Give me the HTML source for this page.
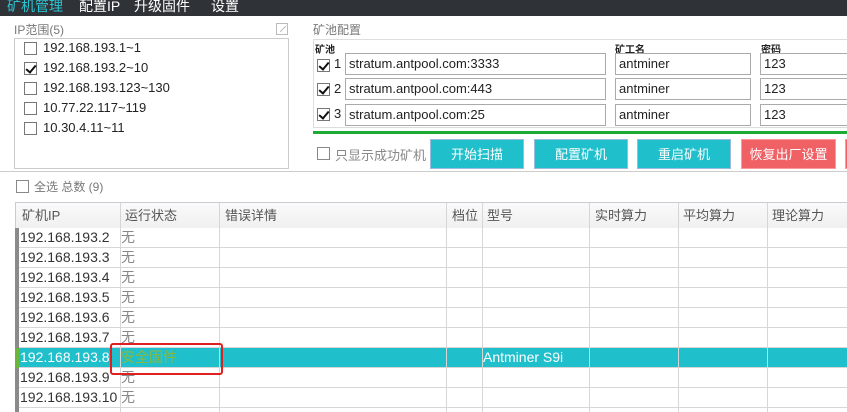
<!DOCTYPE html>
<html><head><meta charset="utf-8"><style>
*{box-sizing:border-box;margin:0;padding:0}
body{width:847px;height:412px;overflow:hidden;background:#fff;font-family:"Liberation Sans","Noto Sans CJK SC",sans-serif;position:relative;color:#333}
.a{position:absolute;white-space:nowrap}
.top{left:0;top:0;width:847px;height:16px;background:#2f3237}
.menu{top:-3px;font-size:14px;color:#fff;line-height:18px}
.cb{position:absolute;width:13px;height:13px;border:1px solid #777;background:#fff}
.cb.on::after{content:"";position:absolute;left:3px;top:0px;width:4px;height:8px;border:solid #111;border-width:0 2px 2px 0;transform:rotate(40deg)}
.lbl{font-size:12px;color:#777}
.ip{font-size:13px;color:#222}
.inp{position:absolute;border:1px solid #aaa;height:22px;font-size:13px;padding:2px 3px;line-height:16px;color:#222;background:#fff}
.btn{position:absolute;top:139px;height:30px;color:#fff;font-size:13px;text-align:center;line-height:30px;border:1px solid #9bd}
.tbl{left:15px;top:202px;width:832px;height:210px;border:1px solid #c9cdd3;border-right:none;border-bottom:none}
.hd{position:absolute;top:203px;height:25px;font-size:13px;color:#555;line-height:25px;background:linear-gradient(#fafafa,#f0f0f0)}
.vl{position:absolute;width:1px;background:#d6d6d6}
.hl{position:absolute;left:19px;width:828px;height:1px;background:#d6d6d6}
.r{position:absolute;font-size:14px;line-height:20px;color:#333}
.w{color:#888}
</style></head><body>
<div class="a top"></div>
<div class="a menu" style="left:7px;color:#2ac4d4">矿机管理</div>
<div class="a menu" style="left:79px">配置IP</div>
<div class="a menu" style="left:134px">升级固件</div>
<div class="a menu" style="left:211px">设置</div>

<div class="a lbl" style="left:14px;top:21px">IP范围(5)</div>
<svg class="a" style="left:276px;top:23px" width="13" height="13"><rect x="0.5" y="0.5" width="11" height="11" fill="none" stroke="#bbb"/><path d="M4 9 L10 3" stroke="#bbb"/></svg>
<div class="a" style="left:14px;top:38px;width:275px;height:131px;border:1px solid #ccc"></div>
<div class="cb" style="left:24px;top:42px"></div><div class="a ip" style="left:43px;top:40px">192.168.193.1~1</div>
<div class="cb on" style="left:24px;top:62px"></div><div class="a ip" style="left:43px;top:60px">192.168.193.2~10</div>
<div class="cb" style="left:24px;top:82px"></div><div class="a ip" style="left:43px;top:80px">192.168.193.123~130</div>
<div class="cb" style="left:24px;top:102px"></div><div class="a ip" style="left:43px;top:100px">10.77.22.117~119</div>
<div class="cb" style="left:24px;top:122px"></div><div class="a ip" style="left:43px;top:120px">10.30.4.11~11</div>

<div class="a lbl" style="left:313px;top:21px">矿池配置</div>
<div class="a" style="left:313px;top:39px;width:540px;height:89px;border:1px solid #ddd"></div>
<div class="a" style="left:315px;top:41px;font-size:10px;font-weight:bold;color:#222">矿池</div>
<div class="a" style="left:615px;top:41px;font-size:10px;font-weight:bold;color:#222">矿工名</div>
<div class="a" style="left:761px;top:41px;font-size:10px;font-weight:bold;color:#222">密码</div>
<div class="cb on" style="left:317px;top:59px"></div><div class="a ip" style="left:334px;top:56px">1</div>
<div class="inp" style="left:345px;top:53px;width:261px">stratum.antpool.com:3333</div>
<div class="inp" style="left:615px;top:53px;width:136px">antminer</div>
<div class="inp" style="left:760px;top:53px;width:100px">123</div>
<div class="cb on" style="left:317px;top:83px"></div><div class="a ip" style="left:334px;top:81px">2</div>
<div class="inp" style="left:345px;top:78px;width:261px">stratum.antpool.com:443</div>
<div class="inp" style="left:615px;top:78px;width:136px">antminer</div>
<div class="inp" style="left:760px;top:78px;width:100px">123</div>
<div class="cb on" style="left:317px;top:108px"></div><div class="a ip" style="left:334px;top:106px">3</div>
<div class="inp" style="left:345px;top:104px;width:261px">stratum.antpool.com:25</div>
<div class="inp" style="left:615px;top:104px;width:136px">antminer</div>
<div class="inp" style="left:760px;top:104px;width:100px">123</div>
<div class="a" style="left:313px;top:131px;width:534px;height:3px;background:#1daa35"></div>
<div class="cb" style="left:317px;top:147px;border-color:#888"></div>
<div class="a" style="left:335px;top:145px;font-size:13px;color:#888">只显示成功矿机</div>
<div class="btn" style="left:430px;width:94px;background:#1fbfcc">开始扫描</div>
<div class="btn" style="left:534px;width:94px;background:#1fbfcc">配置矿机</div>
<div class="btn" style="left:637px;width:94px;background:#1fbfcc">重启矿机</div>
<div class="btn" style="left:741px;width:95px;background:#f06166;border-color:#f99">恢复出厂设置</div>
<div class="btn" style="left:845px;width:10px;background:#f06166;border-color:#f99"></div>
<div class="a" style="left:0;top:171px;width:847px;height:1px;background:#ccc"></div>

<div class="cb" style="left:16px;top:180px;border-color:#888"></div>
<div class="a" style="left:34px;top:178px;font-size:12px;color:#777">全选 总数 (9)</div>

<div class="a tbl"></div>
<div class="hd" style="left:16px;width:831px"></div>
<div class="a hd" style="left:22px;background:none">矿机IP</div>
<div class="a hd" style="left:125px;background:none">运行状态</div>
<div class="a hd" style="left:225px;background:none">错误详情</div>
<div class="a hd" style="left:452px;background:none">档位</div>
<div class="a hd" style="left:487px;background:none">型号</div>
<div class="a hd" style="left:595px;background:none">实时算力</div>
<div class="a hd" style="left:683px;background:none">平均算力</div>
<div class="a hd" style="left:772px;background:none">理论算力</div>
<div class="a" style="left:15px;top:228px;width:4px;height:184px;background:#8a8a8a"></div>
<div class="a" style="left:19px;top:348px;width:828px;height:20px;background:#1fbfcc"></div>
<div class="a" style="left:15px;top:348px;width:4px;height:20px;background:#6bb53a"></div>

<div class="hl" style="top:247px"></div><div class="hl" style="top:267px"></div><div class="hl" style="top:287px"></div><div class="hl" style="top:307px"></div><div class="hl" style="top:327px"></div><div class="hl" style="top:347px"></div><div class="hl" style="top:367px"></div><div class="hl" style="top:387px"></div><div class="hl" style="top:407px"></div>
<div class="vl" style="left:120px;top:203px;height:209px"></div>
<div class="vl" style="left:219px;top:203px;height:209px"></div>
<div class="vl" style="left:446px;top:203px;height:209px"></div>
<div class="vl" style="left:482px;top:203px;height:209px"></div>
<div class="vl" style="left:589px;top:203px;height:209px"></div>
<div class="vl" style="left:678px;top:203px;height:209px"></div>
<div class="vl" style="left:767px;top:203px;height:209px"></div>

<div class="r" style="left:20px;top:227px">192.168.193.2</div><div class="r w" style="left:121px;top:227px">无</div>
<div class="r" style="left:20px;top:247px">192.168.193.3</div><div class="r w" style="left:121px;top:247px">无</div>
<div class="r" style="left:20px;top:267px">192.168.193.4</div><div class="r w" style="left:121px;top:267px">无</div>
<div class="r" style="left:20px;top:287px">192.168.193.5</div><div class="r w" style="left:121px;top:287px">无</div>
<div class="r" style="left:20px;top:307px">192.168.193.6</div><div class="r w" style="left:121px;top:307px">无</div>
<div class="r" style="left:20px;top:327px">192.168.193.7</div><div class="r w" style="left:121px;top:327px">无</div>
<div class="r" style="left:20px;top:347px;color:#fff">192.168.193.8</div><div class="r" style="left:121px;top:347px;color:#8cb83a">安全固件</div>
<div class="r" style="left:483px;top:347px;color:#fff">Antminer S9i</div>
<div class="r" style="left:20px;top:367px">192.168.193.9</div><div class="r w" style="left:121px;top:367px">无</div>
<div class="r" style="left:20px;top:387px">192.168.193.10</div><div class="r w" style="left:121px;top:387px">无</div>
<div class="a" style="left:110px;top:343px;width:113px;height:32px;border:2px solid #e02020;border-radius:3px"></div>
</body></html>
